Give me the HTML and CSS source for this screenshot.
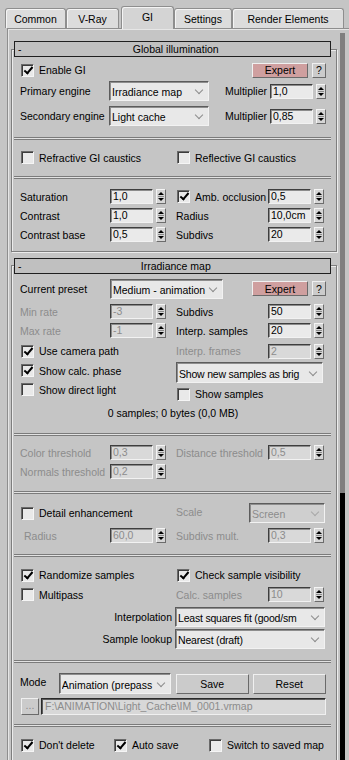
FILE: index.html
```html
<!DOCTYPE html>

<html lang="en">
  <head>
    <meta charset="UTF-8" />

    <title>Render Setup - GI</title>

    <link rel="stylesheet" href="styles.css">
  </head>

  <body>
    <div class="tabs">
      <div class="tab tab-common">Common</div>
      <div class="tab tab-vray">V-Ray</div>
      <div class="tab tab-gi active">GI</div>
      <div class="tab tab-settings">Settings</div>
      <div class="tab tab-re">Render Elements</div>
    </div>

    <div class="page">
      <div class="rollouts">
        <!-- Global illumination -->
        <div class="frame frame-gi">
          <div class="head"><span class="minus">-</span>Global illumination</div>

          <div class="row row-enable">
            <span class="chk on"><i class="box"></i>Enable GI</span>
            <span class="btn expert">Expert</span>
            <span class="btn help">?</span>
          </div>

          <div class="row row-engine first">
            <span class="lbl lbl-engine">Primary engine</span>
            <span class="drop drop-engine"><span class="val">Irradiance map</span><span class="chev"></span></span>
            <span class="mult">Multiplier</span>
            <span class="spin"><span class="field">1,0</span><span class="arr"></span></span>
          </div>

          <div class="row row-engine second">
            <span class="lbl lbl-engine">Secondary engine</span>
            <span class="drop drop-engine"><span class="val">Light cache</span><span class="chev"></span></span>
            <span class="mult">Multiplier</span>
            <span class="spin"><span class="field">0,85</span><span class="arr"></span></span>
          </div>

          <div class="sep sep-1"></div>

          <div class="grid row-caustics">
            <span class="chk span2"><i class="box"></i>Refractive GI caustics</span>
            <span class="chk span2"><i class="box"></i>Reflective GI caustics</span>
          </div>

          <div class="sep sep-2"></div>

          <div class="grid row-sat">
            <span class="lbl">Saturation</span>
            <span class="spin"><span class="field">1,0</span><span class="arr"></span></span>
            <span class="chk on"><i class="box"></i>Amb. occlusion</span>
            <span class="spin"><span class="field">0,5</span><span class="arr"></span></span>
          </div>

          <div class="grid">
            <span class="lbl">Contrast</span>
            <span class="spin"><span class="field">1,0</span><span class="arr"></span></span>
            <span class="lbl">Radius</span>
            <span class="spin"><span class="field">10,0cm</span><span class="arr"></span></span>
          </div>

          <div class="grid">
            <span class="lbl">Contrast base</span>
            <span class="spin"><span class="field">0,5</span><span class="arr"></span></span>
            <span class="lbl">Subdivs</span>
            <span class="spin"><span class="field">20</span><span class="arr"></span></span>
          </div>
        </div>

        <!-- Irradiance map -->
        <div class="frame frame-irr">
          <div class="head"><span class="minus">-</span>Irradiance map</div>

          <div class="row row-preset">
            <span class="lbl">Current preset</span>
            <span class="drop drop-preset"><span class="val">Medium - animation</span><span class="chev"></span></span>
            <span class="btn expert">Expert</span>
            <span class="btn help">?</span>
          </div>

          <div class="grid row-rate">
            <span class="lbl dis">Min rate</span>
            <span class="spin dis"><span class="field">-3</span><span class="arr"></span></span>
            <span class="lbl">Subdivs</span>
            <span class="spin"><span class="field">50</span><span class="arr"></span></span>
          </div>

          <div class="grid">
            <span class="lbl dis">Max rate</span>
            <span class="spin dis"><span class="field">-1</span><span class="arr"></span></span>
            <span class="lbl">Interp. samples</span>
            <span class="spin"><span class="field">20</span><span class="arr"></span></span>
          </div>

          <div class="cols">
            <div class="col-l">
              <div class="line"><span class="chk on"><i class="box"></i>Use camera path</span></div>
              <div class="line short"><span class="chk on"><i class="box"></i>Show calc. phase</span></div>
              <div class="line short"><span class="chk"><i class="box"></i>Show direct light</span></div>
            </div>

            <div class="col-r">
              <div class="grid2">
                <span class="lbl dis">Interp. frames</span>
                <span class="spin dis"><span class="field">2</span><span class="arr"></span></span>
              </div>
              <span class="drop drop-show"><span class="val">Show new samples as brig</span><span class="chev"></span></span>
              <div class="line samples"><span class="chk"><i class="box"></i>Show samples</span></div>
            </div>
          </div>

          <div class="status">0 samples; 0 bytes (0,0 MB)</div>

          <div class="sep sep-3"></div>

          <div class="grid row-thr">
            <span class="lbl dis">Color threshold</span>
            <span class="spin dis"><span class="field">0,3</span><span class="arr"></span></span>
            <span class="lbl dis">Distance threshold</span>
            <span class="spin dis"><span class="field">0,5</span><span class="arr"></span></span>
          </div>

          <div class="grid">
            <span class="lbl dis">Normals threshold</span>
            <span class="spin dis"><span class="field">0,2</span><span class="arr"></span></span>
          </div>

          <div class="sep sep-4"></div>

          <div class="row row-detail">
            <span class="chk w156"><i class="box"></i>Detail enhancement</span>
            <span class="lbl dis lbl-scale">Scale</span>
            <span class="drop dis drop-scale"><span class="val">Screen</span><span class="chev"></span></span>
          </div>

          <div class="grid row-radius">
            <span class="lbl dis indent">Radius</span>
            <span class="spin dis"><span class="field">60,0</span><span class="arr"></span></span>
            <span class="lbl dis">Subdivs mult.</span>
            <span class="spin dis"><span class="field">0,3</span><span class="arr"></span></span>
          </div>

          <div class="sep sep-5"></div>

          <div class="grid row-rand">
            <span class="chk on span2"><i class="box"></i>Randomize samples</span>
            <span class="chk on span2"><i class="box"></i>Check sample visibility</span>
          </div>

          <div class="grid">
            <span class="chk span2"><i class="box"></i>Multipass</span>
            <span class="lbl dis">Calc. samples</span>
            <span class="spin dis"><span class="field">10</span><span class="arr"></span></span>
          </div>

          <div class="row row-pick first">
            <span class="lbl lbl-pick">Interpolation</span>
            <span class="drop drop-pick"><span class="val">Least squares fit (good/sm</span><span class="chev"></span></span>
          </div>

          <div class="row row-pick">
            <span class="lbl lbl-pick">Sample lookup</span>
            <span class="drop drop-pick"><span class="val">Nearest (draft)</span><span class="chev"></span></span>
          </div>

          <div class="sep sep-6"></div>

          <div class="row row-mode">
            <span class="lbl lbl-mode">Mode</span>
            <span class="drop drop-mode"><span class="val">Animation (prepass</span><span class="chev"></span></span>
            <span class="btn btn-save">Save</span>
            <span class="btn btn-reset">Reset</span>
          </div>

          <div class="row row-path">
            <span class="btn dis btn-dots">...</span>
            <span class="path">F:\ANIMATION\Light_Cache\IM_0001.vrmap</span>
          </div>

          <div class="sep sep-7"></div>

          <div class="row row-bottom">
            <span class="chk on w93"><i class="box"></i>Don't delete</span>
            <span class="chk on w95"><i class="box"></i>Auto save</span>
            <span class="chk"><i class="box"></i>Switch to saved map</span>
          </div>
        </div>
      </div>

      <div class="strip"></div>
    </div>
  </body>
</html>
```

FILE: styles.css
```css
body {
  margin: 0;

  width: 349px;

  height: 760px;

  overflow: hidden;

  background-color: #c5c5c5;

  font-family: "Liberation Sans", Arial, sans-serif;

  font-size: 10.5px;

  color: #000;
}

/* tabs */

.tabs {
  display: flex;

  align-items: flex-end;

  height: 28px;

  padding-left: 5px;
}

.tab {
  box-sizing: border-box;

  display: flex;

  align-items: center;

  justify-content: center;

  height: 20px;

  padding-top: 1px;

  border: 1px solid #8e8e8e;

  border-bottom: none;

  border-radius: 3px 3px 0 0;

  background-color: #dcdcdc;

  box-shadow: inset 1px 1px 0 #f4f4f4;
}

.tab-common {
  width: 61px;
}

.tab-vray {
  width: 53px;

  margin-right: 2px;
}

.tab-gi {
  width: 53px;
}

.tab-settings {
  width: 58px;
}

.tab-re {
  width: 112px;
}

.tab.active {
  position: relative;

  z-index: 1;

  height: 23px;

  margin-bottom: -1px;

  padding-top: 0;

  padding-bottom: 2px;

  background-color: #d4d4d4;
}

/* page */

.page {
  display: flex;

  height: 740px;

  margin-left: 7px;

  padding-left: 3px;

  border-top: 1px solid #8e8e8e;

  border-left: 1px solid #8e8e8e;

  box-shadow: inset 1px 1px 0 #e6e6e6;
}

.rollouts {
  width: 326px;
}

.strip {
  width: 5px;

  margin-left: 3px;

  margin-top: 4px;

  background: linear-gradient(#7f7f7f 0, #7f7f7f 460px, #000 460px);
}

.frame {
  box-sizing: border-box;

  width: 326px;

  padding: 0 10px 7px 8px;

  border: 1px solid #7e7e7e;

  box-shadow: inset 1px 1px 0 #ececec, 1px 1px 0 #ececec;
}

.frame-gi {
  margin-top: 20px;
}

.frame-irr {
  margin-top: 13px;

  border-bottom: none;
}

.head {
  box-sizing: border-box;

  position: relative;

  height: 16px;

  margin: -9px -5px 0 -6px;

  border: 1px solid #1f1f1f;

  background-color: #c0c0c0;

  text-align: center;

  line-height: 14px;
}

.frame-irr .head {
  margin-top: -8px;
}

.minus {
  float: left;

  margin-left: 3px;
}

.sep {
  height: 1px;

  margin: 0 -5px 0 -6px;

  border-top: 1px solid #7b7b7b;

  border-bottom: 1px solid #7b7b7b;

  background-color: #e2e2e2;
}

/* rows */

.row {
  display: flex;

  align-items: center;
}

.grid {
  display: grid;

  grid-template-columns: 90px 66px 92px 57px;

  align-items: center;

  height: 19px;
}

.grid2 {
  display: grid;

  grid-template-columns: 92px 57px;

  align-items: center;

  height: 20px;
}

.span2 {
  grid-column: span 2;
}

.lbl {
  white-space: nowrap;
}

.dis,
.dis .field {
  color: #8c8c8c;
}

.indent {
  padding-left: 4px;
}

.row-enable {
  height: 18px;

  margin-top: 4px;
}

.row-engine {
  height: 20px;
}

.row-engine.first {
  margin-top: 2px;
}

.row-engine.second {
  margin-top: 5px;
}

.lbl-engine {
  width: 89px;
}

.mult {
  flex: 1;

  padding-right: 3px;

  text-align: right;
}

.sep-1 {
  margin-top: 11px;
}

.row-caustics {
  margin-top: 8px;
}

.sep-2 {
  margin-top: 9px;
}

.row-sat {
  margin-top: 8px;
}

.row-preset {
  height: 21px;

  margin-top: 4px;
}

.row-preset .lbl {
  width: 90px;
}

.row-rate {
  margin-top: 3px;
}

.cols {
  display: flex;

  margin-top: 1px;
}

.col-l {
  width: 156px;
}

.col-r {
  width: 149px;
}

.line {
  display: flex;

  align-items: center;

  height: 20px;
}

.line.short {
  height: 19px;
}

.line.samples {
  height: 18px;

  margin-top: 2px;
}

.status {
  height: 16px;

  margin-top: 2px;

  line-height: 16px;

  text-align: center;
}

.sep-3 {
  margin-top: 12px;
}

.row-thr {
  margin-top: 7px;
}

.sep-4 {
  margin-top: 10px;
}

.row-detail {
  height: 20px;

  margin-top: 9px;
}

.w156 {
  width: 156px;
}

.w93 {
  width: 93px;
}

.w95 {
  width: 95px;
}

.lbl-scale {
  width: 73px;

  margin-top: -3px;
}

.row-radius {
  margin-top: 3px;
}

.sep-5 {
  margin-top: 9px;
}

.row-rand {
  height: 20px;

  margin-top: 8px;
}

.row-pick {
  height: 20px;

  margin-top: 2px;
}

.row-pick.first {
  margin-top: 3px;
}

.lbl-pick {
  width: 152px;

  text-align: right;
}

.sep-6 {
  margin-top: 11px;
}

.row-mode {
  height: 21px;

  margin-top: 10px;
}

.lbl-mode {
  width: 39px;

  margin-top: -3px;
}

.row-path {
  height: 17px;

  margin-top: 4px;
}

.sep-7 {
  margin-top: 9px;
}

.row-bottom {
  height: 20px;

  margin-top: 8px;
}

/* checkbox */

.chk {
  display: flex;

  align-items: center;

  white-space: nowrap;
}

.box {
  box-sizing: border-box;

  display: flex;

  align-items: center;

  justify-content: center;

  width: 13px;

  height: 13px;

  margin: 0 5px 0 1px;

  border: 1px solid;

  border-color: #6a6a6a #f5f5f5 #f5f5f5 #6a6a6a;

  background-color: #e9e9e9;

  box-shadow: inset 1px 1px 0 #3c3c3c;
}

.chk.on .box::after {
  content: "";

  width: 3px;

  height: 7px;

  margin: -2px 0 0 1px;

  border-right: 2px solid #000;

  border-bottom: 2px solid #000;

  transform: rotate(40deg);
}

/* spinner */

.spin {
  display: flex;
}

.field {
  box-sizing: border-box;

  width: 43px;

  height: 15px;

  padding-left: 2px;

  border: 1px solid;

  border-color: #3e3e3e #f2f2f2 #f2f2f2 #3e3e3e;

  background-color: #eaeaea;

  box-shadow: inset 1px 1px 0 #8c8c8c;

  line-height: 13px;

  white-space: nowrap;

  overflow: hidden;
}

.dis .field {
  background-color: #d9d9d9;
}

.arr {
  box-sizing: border-box;

  display: flex;

  flex-direction: column;

  align-items: center;

  justify-content: space-between;

  width: 10px;

  height: 15px;

  margin-left: 3px;

  padding: 2px 0 2px;

  border: 1px solid;

  border-color: #f4f4f4 #6c6c6c #6c6c6c #f4f4f4;

  background: linear-gradient(#8a8a8a, #8a8a8a) center / 6px 1px no-repeat, #d6d6d6;
}

.arr::before {
  content: "";

  border-left: 3px solid transparent;

  border-right: 3px solid transparent;

  border-bottom: 3px solid #000;
}

.arr::after {
  content: "";

  border-left: 3px solid transparent;

  border-right: 3px solid transparent;

  border-top: 3px solid #000;
}

/* dropdown */

.drop {
  box-sizing: border-box;

  display: flex;

  align-items: center;

  height: 20px;

  padding: 2px 0 0 2px;

  border: 1px solid;

  border-color: #5c5c5c #f2f2f2 #f2f2f2 #5c5c5c;

  background-color: #e8e8e8;

  box-shadow: inset 1px 1px 0 #8e8e8e;
}

.drop .val {
  flex: 1;

  overflow: hidden;

  white-space: nowrap;
}

.chev {
  width: 8px;

  height: 8px;

  margin: 0 5px 0 2px;

  display: flex;

  align-items: center;

  justify-content: center;
}

.chev::before {
  content: "";

  width: 5px;

  height: 5px;

  margin-top: -4px;

  border-right: 1px solid #8c8c8c;

  border-bottom: 1px solid #8c8c8c;

  transform: rotate(45deg);
}

.drop.dis {
  background-color: #cfcfcf;
}

.drop.dis .chev::before {
  border-color: #a8a8a8;
}

.drop-engine {
  width: 100px;
}

.drop-preset {
  width: 113px;
}

.drop-show {
  width: 147px;

  height: 21px;

  margin-top: 1px;
}

.drop-show .val,
.drop-pick .val {
  letter-spacing: -0.2px;
}

.drop-scale {
  width: 76px;
}

.drop-pick {
  width: 150px;

  margin-left: 3px;
}

.drop-mode {
  width: 113px;

  height: 21px;
}

/* buttons */

.btn {
  box-sizing: border-box;

  display: flex;

  align-items: center;

  justify-content: center;

  height: 15px;

  border: 1px solid;

  border-color: #f0f0f0 #6a6a6a #6a6a6a #f0f0f0;

  background-color: #cbcbcb;
}

.expert {
  width: 56px;

  margin-left: auto;

  background-color: #cf9f9f;
}

.help {
  width: 14px;

  margin-left: 4px;
}

.btn-save {
  width: 73px;

  height: 20px;

  margin-left: 5px;
}

.btn-reset {
  width: 74px;

  height: 20px;

  margin-left: 4px;
}

.btn-dots {
  width: 18px;

  height: 17px;

  margin-left: 1px;

  padding-bottom: 3px;
}

.path {
  box-sizing: border-box;

  width: 285px;

  height: 17px;

  margin-left: 2px;

  padding-left: 3px;

  border: 1px solid;

  border-color: #2a2a2a #f0f0f0 #f0f0f0 #2a2a2a;

  background-color: #d8d8d8;

  box-shadow: inset 1px 1px 0 #5a5a5a;

  color: #8c8c8c;

  line-height: 15px;

  white-space: nowrap;

  overflow: hidden;
}
```
